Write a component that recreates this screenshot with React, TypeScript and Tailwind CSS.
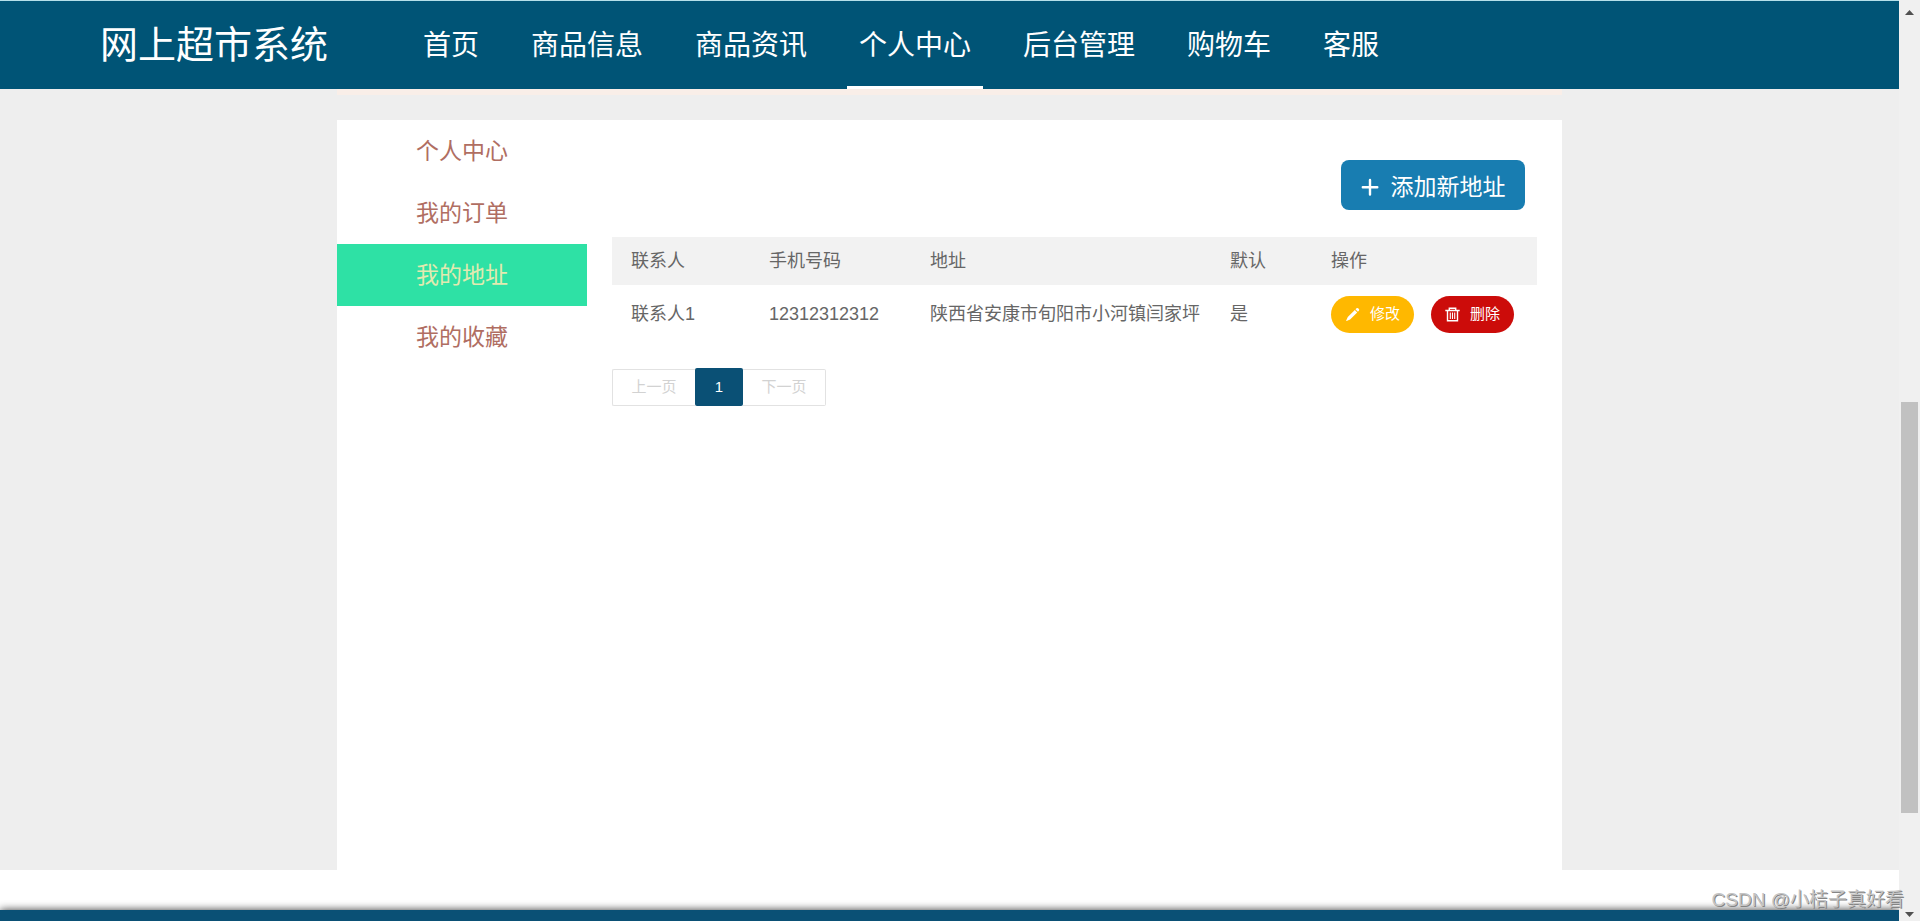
import { useState } from "react";
import clsx from "clsx";

const navItems = ["首页", "商品信息", "商品资讯", "个人中心", "后台管理", "购物车", "客服"];

const menuItems = ["个人中心", "我的订单", "我的地址", "我的收藏"];

const addresses = [
  {
    id: 1,
    name: "联系人1",
    phone: "12312312312",
    address: "陕西省安康市旬阳市小河镇闫家坪",
    isDefault: "是",
  },
];

function PlusIcon() {
  return (
    <svg className="w-[18px] h-[18px]" viewBox="0 0 18 18" fill="none" stroke="currentColor" strokeWidth="2.4" strokeLinecap="round" aria-hidden="true">
      <path d="M9 2v14.500M1.800 9.200h14.500" />
    </svg>
  );
}

function PencilIcon() {
  return (
    <svg className="w-[15px] h-[15px]" viewBox="0 0 15 15" fill="currentColor" aria-hidden="true">
      <path d="M11.500 1.300a1.200 1.200 0 0 1 1.600 0l.8.8a1.200 1.200 0 0 1 0 1.600l-1 1-2.400-2.400zM9.800 3l2.400 2.400-7.100 7-3.500 1.500a.3.3 0 0 1-.4-.4l1.600-3.500z" />
    </svg>
  );
}

function TrashIcon() {
  return (
    <svg className="w-[15px] h-[15px]" viewBox="0 0 15 15" fill="none" stroke="currentColor" strokeWidth="1.4" aria-hidden="true">
      <path d="M.3 3.500h14.400M4.300 3.300V1.300h6.400v2M2.500 3.500v10.300h10V3.500" />
      <path d="M5.300 5.500v6.500M7.500 5.500v6.500M9.700 5.500v6.500" strokeWidth="1.100" />
    </svg>
  );
}

function Header() {
  return (
    <header className="flex h-[89px] shrink-0 items-stretch border-t border-[#b5e0ea] bg-[#005476] pl-[100px] text-white">
      <h1 className="flex w-[311px] items-center text-[38px] leading-none">网上超市系统</h1>
      <nav className="flex gap-7">
        {navItems.map((item) => (
          <a
            key={item}
            href="#"
            className={clsx(
              "flex items-center border-b-3 px-3 pt-[5px] text-[28px] leading-none",
              item === "个人中心" ? "border-white" : "border-transparent"
            )}
          >
            {item}
          </a>
        ))}
      </nav>
    </header>
  );
}

function Sidebar({ active, onSelect }: { active: string; onSelect: (item: string) => void }) {
  return (
    <aside className="w-[250px] shrink-0">
      {menuItems.map((item) => (
        <button
          key={item}
          type="button"
          onClick={() => onSelect(item)}
          className={clsx(
            "block h-[62px] w-full cursor-pointer pl-[79px] text-left text-[23px]",
            item === active ? "bg-[#2ee1a5] text-[#e2eab0]" : "text-[#b06e62]"
          )}
        >
          {item}
        </button>
      ))}
    </aside>
  );
}

function AddressTable() {
  return (
    <table className="w-full table-fixed text-left text-lg text-[#666]">
      <colgroup>
        <col className="w-[138px]" />
        <col className="w-[161px]" />
        <col className="w-[300px]" />
        <col className="w-[101px]" />
        <col />
      </colgroup>
      <thead>
        <tr className="h-12 bg-[#f2f2f2]">
          <th className="pl-[19px] font-normal">联系人</th>
          <th className="pl-[19px] font-normal">手机号码</th>
          <th className="pl-[19px] font-normal">地址</th>
          <th className="pl-[19px] font-normal">默认</th>
          <th className="pl-[19px] font-normal">操作</th>
        </tr>
      </thead>
      <tbody>
        {addresses.map((row) => (
          <tr key={row.id} className="h-[58px]">
            <td className="pl-[19px]">{row.name}</td>
            <td className="pl-[19px]">{row.phone}</td>
            <td className="pl-[19px] whitespace-nowrap">{row.address}</td>
            <td className="pl-[19px]">{row.isDefault}</td>
            <td className="pl-[19px]">
              <div className="flex gap-[17px] text-[15px] text-white">
                <button type="button" className="flex h-[37px] w-[83px] cursor-pointer items-center justify-center gap-[10px] rounded-full bg-[#ffb800]">
                  <PencilIcon />
                  修改
                </button>
                <button type="button" className="flex h-[37px] w-[83px] cursor-pointer items-center justify-center gap-[10px] rounded-full bg-[#cc0c0a]">
                  <TrashIcon />
                  删除
                </button>
              </div>
            </td>
          </tr>
        ))}
      </tbody>
    </table>
  );
}

function Pagination() {
  return (
    <nav aria-label="分页" className="mt-[25px] flex items-center text-[15px]">
      <button type="button" disabled className="h-[37px] w-[83px] rounded-l-xs border border-r-0 border-[#e2e2e2] text-[#d2d2d2]">
        上一页
      </button>
      <button type="button" className="h-[38px] w-12 rounded-xs bg-[#0a5075] text-white">
        1
      </button>
      <button type="button" disabled className="h-[37px] w-[83px] rounded-r-xs border border-l-0 border-[#e2e2e2] text-[#d2d2d2]">
        下一页
      </button>
    </nav>
  );
}

function ScrollBar() {
  return (
    <div aria-hidden="true" className="flex w-[21px] shrink-0 flex-col items-center justify-between bg-[#f0f0f0] pt-[10px] pb-1">
      <svg className="h-[5px] w-[9px]" viewBox="0 0 9 5" fill="#505050">
        <path d="M0 5 4.500 0 9 5z" />
      </svg>
      <div className="flex w-[17px] flex-1 flex-col">
        <div className="flex-[387]" />
        <div className="flex-[410] bg-[#c1c1c1]" />
        <div className="flex-[99]" />
      </div>
      <svg className="h-[5px] w-[9px]" viewBox="0 0 9 5" fill="#505050">
        <path d="M0 0h9L4.500 5z" />
      </svg>
    </div>
  );
}

export default function App() {
  const [active, setActive] = useState("我的地址");

  return (
    <div className="relative flex h-screen overflow-hidden bg-white font-['Liberation_Sans','Noto_Sans_CJK_SC',sans-serif]">
      <div className="flex min-w-0 flex-1 flex-col">
        <Header />
        <main className="flex flex-1 flex-col bg-[#eee]">
          <div className="mx-auto h-[6px] w-full max-w-[1225px] bg-[#f9eee8]" />
          <div className="mx-auto mt-[25px] flex w-full max-w-[1225px] flex-1 bg-white">
            <Sidebar active={active} onSelect={setActive} />
            <section className="min-w-0 flex-1 px-[25px] pt-10">
              <div className="mb-[27px] flex justify-end pr-3">
                <button type="button" className="flex h-[50px] w-[184px] cursor-pointer items-center justify-center gap-3 rounded-lg bg-[#187db1] pt-1 text-[23px] text-white">
                  <PlusIcon />
                  添加新地址
                </button>
              </div>
              <AddressTable />
              <Pagination />
            </section>
          </div>
        </main>
        <div className="h-10 shrink-0 bg-white" />
        <footer className="h-[11px] shrink-0 bg-[#0a5075] shadow-[0_0_8px_rgba(0,0,0,0.8)]" />
      </div>
      <ScrollBar />
      <p className="absolute right-4 bottom-[7px] text-[19px] text-[#c4c4c4] [text-shadow:1px_1px_0_#858585]">
        CSDN @小桔子真好看
      </p>
    </div>
  );
}
